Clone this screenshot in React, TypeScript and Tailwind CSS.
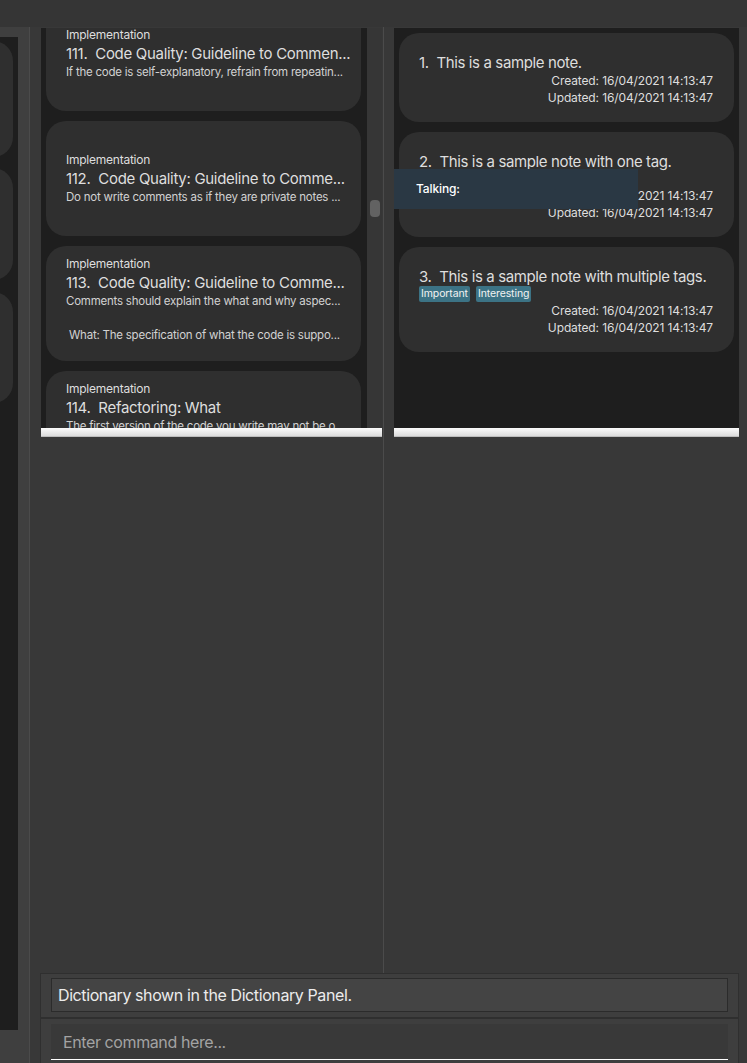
import React from 'react';

type Lesson = {
    idx: number;
    title: string;
    lines: string[];
};

type Note = {
    idx: number;
    text: string;
    tags: string[];
};

const lessons: Lesson[] = [
    { idx: 111, title: 'Code Quality: Guideline to Commen...', lines: ['If the code is self-explanatory, refrain from repeatin...'] },
    { idx: 112, title: 'Code Quality: Guideline to Comme...', lines: ['Do not write comments as if they are private notes ...'] },
    { idx: 113, title: 'Code Quality: Guideline to Comme...', lines: ['Comments should explain the what and why aspec...', '', ' What: The specification of what the code is suppo...'] },
    { idx: 114, title: 'Refactoring: What', lines: ['The first version of the code you write may not be o...', '', 'Refactoring is the process of improving...'] },
];

const notes: Note[] = [
    { idx: 1, text: 'This is a sample note.', tags: [] },
    { idx: 2, text: 'This is a sample note with one tag.', tags: ['Important'] },
    { idx: 3, text: 'This is a sample note with multiple tags.', tags: ['Important', 'Interesting'] },
];

const STAMP = '16/04/2021 14:13:47';

const LessonCard = ({ lesson, first }: { lesson: Lesson; first?: boolean }) => (
    <div className={`h-[115px] shrink-0 rounded-[20px] bg-[#2f2f2f] pl-5 pr-3 flex flex-col justify-center text-[#dedede] overflow-hidden ${first ? 'mt-[-37px]' : ''} ${lesson.lines.length > 1 ? 'pb-[8px]' : ''}`}>
        <div className="text-[12px] leading-[17px] tracking-[-0.02em] whitespace-nowrap">Implementation</div>
        <div className="text-[15px] leading-[21px] tracking-[-0.02em] whitespace-pre">{lesson.idx}.  {lesson.title}</div>
        {lesson.lines.map((l, i) => (
            <div key={i} className="text-[11.5px] leading-[17px] tracking-[-0.02em] whitespace-pre text-[#d2d2d2] h-[17px]">{l}</div>
        ))}
    </div>
);

const NoteCard = ({ note }: { note: Note }) => (
    <div className="rounded-[20px] bg-[#2f2f2f] pl-5 pr-[21px] pt-[20px] pb-[16px] text-[#dedede]">
        <div className="text-[15px] leading-[19px] tracking-[-0.025em] whitespace-pre">{note.idx}.  {note.text}</div>
        {note.tags.length > 0 && (
            <div className="flex gap-[6px] h-[16px]">
                {note.tags.map((t) => (
                    <span key={t} className="bg-[#3c7385] text-[#f2f2f2] text-[10.5px] leading-[16px] px-[2px] tracking-[-0.01em] rounded-[2px]">{t}</span>
                ))}
            </div>
        )}
        <div className="text-right text-[12px] leading-[17px] tracking-[-0.01em]">
            <div>Created: {STAMP}</div>
            <div>Updated: {STAMP}</div>
        </div>
    </div>
);

const HBar = () => (
    <div className="h-[9px] shrink-0 bg-gradient-to-b from-[#fbfbfb] to-[#dcdcdc] border-b border-[#bdbdbd]" />
);

const App: React.FC = () => {
    return (
        <div className="w-[747px] h-[1063px] bg-[#383838] flex flex-col overflow-hidden" style={{ fontFamily: 'Inter, "Noto Sans", sans-serif' }}>
            {/* top menu strip */}
            <div className="h-[27px] shrink-0 bg-[#353535]" />

            <div className="flex-1 flex min-h-0">
                {/* left side panel, mostly cut off */}
                <div className="w-[30px] shrink-0 flex border-r border-[#4b4b4b]">
                    <div className="w-[29px] bg-[#3f3f3f] pt-[10px] pr-[11px]">
                        <div className="h-[993px] bg-[#1e1e1e] overflow-hidden flex flex-col items-end pt-[4px] pr-[5px]">
                            <div className="w-[200px] h-[116px] shrink-0 rounded-[20px] bg-[#2f2f2f]" />
                            <div className="w-[200px] h-[112px] shrink-0 rounded-[20px] bg-[#2f2f2f] mt-[11px]" />
                            <div className="w-[200px] h-[111px] shrink-0 rounded-[20px] bg-[#2f2f2f] mt-[12px]" />
                        </div>
                    </div>
                </div>

                {/* main */}
                <div className="flex-1 flex flex-col min-w-0">
                    <div className="flex-1 flex min-h-0">
                        {/* lesson list */}
                        <div className="w-[354px] shrink-0 pl-[11px] pt-[1px] border-r border-[#4b4b4b]">
                            <div className="w-[341px] flex flex-col">
                                <div className="h-[400px] bg-[#1e1e1e] flex overflow-hidden">
                                    <div className="w-[326px] pl-[5px] pr-[6px] pt-[5px] flex flex-col gap-[10px] overflow-hidden">
                                        {lessons.map((l, i) => (
                                            <LessonCard key={l.idx} lesson={l} first={i === 0} />
                                        ))}
                                    </div>
                                    <div className="w-[15px] bg-[#363636] relative">
                                        <div className="absolute left-[3px] top-[172px] w-[10px] h-[17px] rounded-[4px] bg-[#626262]" />
                                    </div>
                                </div>
                                <HBar />
                            </div>
                        </div>

                        {/* notes list */}
                        <div className="flex-1 min-w-0 pl-[10px] pr-[8px] pt-[1px]">
                            <div className="relative w-[345px] flex flex-col">
                                <div className="h-[400px] bg-[#1e1e1e] p-[5px] flex flex-col gap-[10px] overflow-hidden">
                                    {notes.map((n) => (
                                        <NoteCard key={n.idx} note={n} />
                                    ))}
                                </div>
                                <HBar />
                                <div className="absolute left-0 top-[141px] w-[244px] h-[40px] bg-[#2a3844] flex items-center pl-[22px] text-[12px] text-white font-medium tracking-[-0.01em]">
                                    Talking:
                                </div>
                            </div>
                        </div>
                    </div>

                    {/* result + command */}
                    <div className="shrink-0 pl-[10px] pr-[8px]">
                        <div className="bg-[#3e3e3e] border-t border-l border-r border-[#2f2f2f] pb-[3px]">
                            <div className="px-[10px] pt-[4px] pb-[5px]">
                                <div className="h-[34px] bg-[#444444] border border-[#2b2b2b] flex items-center px-[6px] text-[16px] text-[#ececec] tracking-[-0.025em]">
                                    Dictionary shown in the Dictionary Panel.
                                </div>
                            </div>
                            <div className="h-[2px] bg-[#2f2f2f]" />
                            <div className="px-[10px] pt-[5px]">
                                <div className="h-[36px] bg-[#393939] border-b border-white flex items-center px-[12px] text-[16px] text-[#a3a3a3] tracking-[-0.025em]">
                                    Enter command here...
                                </div>
                            </div>
                        </div>
                    </div>
                </div>
            </div>
        </div>
    );
};

export default App;
